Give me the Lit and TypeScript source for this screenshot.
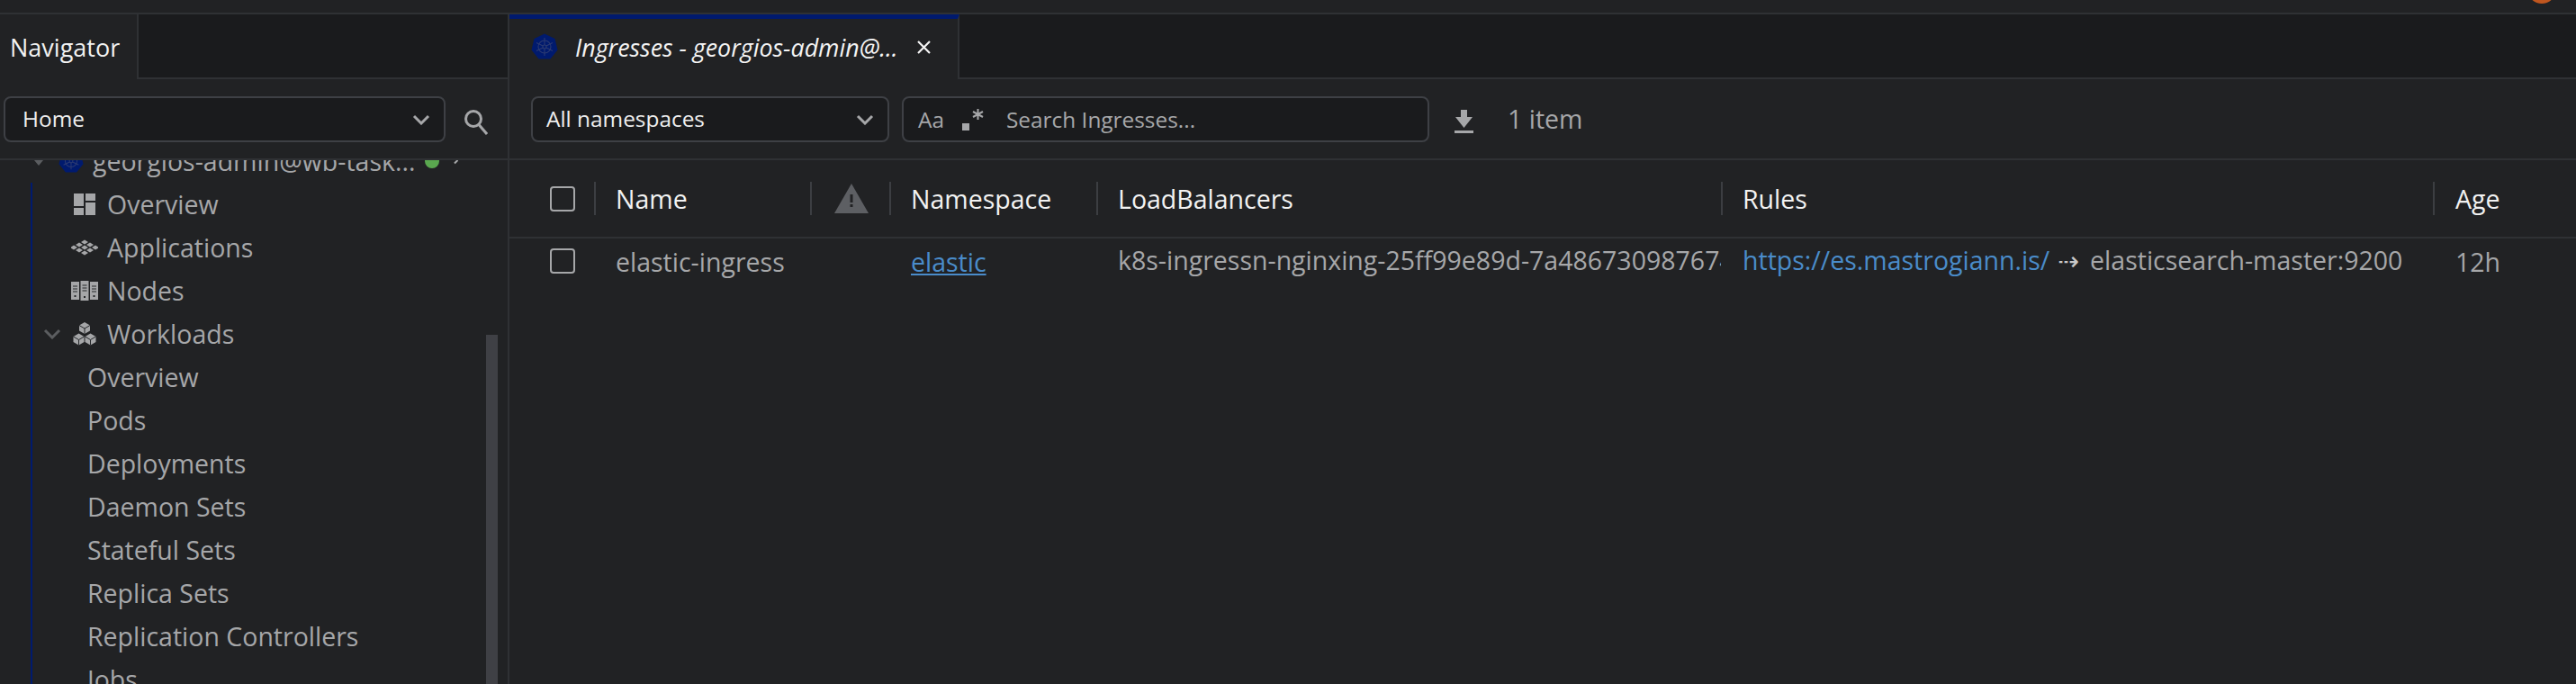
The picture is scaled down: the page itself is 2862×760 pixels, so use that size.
import { LitElement, html, css, svg } from "lit";
import { customElement } from "lit/decorators.js";

const helm = (size: number) => html`<svg width=${size} height=${size} viewBox="0 0 30 30">
  <path fill="#001a6e" d="M15 0.5 L26.5 6 L29.5 18.5 L21.5 28.5 L8.5 28.5 L0.5 18.5 L3.5 6 Z" />
  <g fill="none" stroke="#2b3a72" stroke-width="1.1">
    <circle cx="15" cy="15" r="7" />
    <circle cx="15" cy="15" r="2" />
    <path d="M15 5V13M15 17V25M6 10.500L13.200 14M16.800 16L24 19.500M24 10.500L16.800 14M13.200 16L6 19.500" />
  </g>
</svg>`;

const chevron = html`<svg class="chev" width="20" height="12" viewBox="0 0 20 12">
  <path d="M2 2L10 10L18 2" fill="none" stroke="currentColor" stroke-width="3" />
</svg>`;

const overviewIcon = html`<svg width="24" height="24" viewBox="0 0 24 24" fill="#a5a6a8">
  <rect x="0" y="0" width="11" height="14" />
  <rect x="13" y="0" width="11" height="8" />
  <rect x="0" y="16" width="11" height="8" />
  <rect x="13" y="10" width="11" height="14" />
</svg>`;

const diamonds: [number, number][] = [
  [15, 3], [9, 6], [21, 6], [3, 9], [15, 9], [27, 9], [9, 12], [21, 12], [15, 15],
];
const appsIcon = html`<svg width="30" height="18" viewBox="0 0 30 18" fill="#a5a6a8">
  ${diamonds.map(([x, y]) => svg`<path d="M${x} ${y - 2.500}L${x + 4} ${y}L${x} ${y + 2.500}L${x - 4} ${y}Z" />`)}
</svg>`;

const server = (x: number, top: number, h: number) => svg`
  <rect x=${x} y=${top} width="9" height=${h} fill="#a5a6a8" />
  <path d="M${x + 2} ${top + 5}h5M${x + 2} ${top + 8}h5M${x + 2} ${top + 11}h5" stroke="#26282b" stroke-width="1.200" />
  <rect x=${x + 3.500} y=${top + h - 5} width="2" height="2" fill="#26282b" />`;
const nodesIcon = html`<svg width="30" height="22" viewBox="0 0 30 22">
  ${server(0, 1, 20)}${server(10.500, 0, 22)}${server(21, 1, 20)}
</svg>`;

const cube = (x: number, y: number) => svg`
  <path d="M${x} ${y}L${x + 6} ${y + 3.500}V${y + 9.500}L${x} ${y + 13}L${x - 6} ${y + 9.500}V${y + 3.500}Z" fill="#a5a6a8" />
  <path d="M${x - 6} ${y + 3.500}L${x} ${y + 7}L${x + 6} ${y + 3.500}M${x} ${y + 7}V${y + 13}" stroke="#26282b" stroke-width="1" fill="none" />`;
const workloadsIcon = html`<svg width="26" height="26" viewBox="0 0 26 26">
  ${cube(13, 0)}${cube(6.500, 12.500)}${cube(19.500, 12.500)}
</svg>`;

const workloads = [
  "Overview", "Pods", "Deployments", "Daemon Sets", "Stateful Sets",
  "Replica Sets", "Replication Controllers", "Jobs",
];

@customElement("app-root")
export class AppRoot extends LitElement {
  static styles = css`
    :host {
      display: block;
      width: 2862px;
      height: 760px;
      overflow: hidden;
      background: #212224;
      color: #a6a7a9;
      font-family: "Open Sans", sans-serif;
      font-size: 28.5px;
    }

    .topbar {
      height: 14px;
      border-bottom: 2px solid #2f3134;
      display: flex;
      justify-content: flex-end;
      overflow: hidden;
    }
    .avatar {
      width: 32px;
      height: 32px;
      border-radius: 50%;
      background: #c0561f;
      margin: -28px 22px 0 0;
    }

    .layout {
      display: flex;
      height: 744px;
    }

    /* sidebar */
    .sidebar {
      width: 564px;
      border-right: 2px solid #2f3134;
      display: flex;
      flex-direction: column;
      position: relative;
      overflow: hidden;
    }
    .tabstrip {
      height: 70px;
      display: flex;
      background: #1a1b1d;
      border-bottom: 2px solid #2f3134;
    }
    .nav-tab {
      width: 154px;
      box-sizing: border-box;
      height: 72px;
      padding-left: 11px;
      display: flex;
      align-items: center;
      background: #212224;
      border-right: 2px solid #2f3134;
      color: #f2f2f2;
      font-size: 27px;
    }
    .nav-tools {
      height: 90px;
      box-sizing: border-box;
      border-bottom: 2px solid #2f3134;
      padding: 19px 0 0 4px;
      display: flex;
      gap: 20px;
    }
    .select {
      box-sizing: border-box;
      height: 51px;
      display: flex;
      align-items: center;
      justify-content: space-between;
      background: #1a1b1d;
      border: 2px solid #3e4045;
      border-radius: 8px;
      color: #eeeeee;
      font-size: 24.4px;
    }
    .select span {
      padding-bottom: 2px;
    }
    .select .chev {
      color: #a6a7a9;
    }
    .nav-select {
      width: 491px;
      padding: 0 15px 0 19px;
    }
    .search-btn {
      margin-top: 14px;
    }

    .tree {
      flex: 1;
      overflow: hidden;
    }
    .tree-inner {
      margin-top: -23px;
    }
    .row {
      box-sizing: border-box;
      height: 48px;
      padding-bottom: 1px;
      display: flex;
      align-items: center;
      white-space: nowrap;
    }
    .cluster {
      padding-left: 38px;
    }
    .triangle {
      width: 0;
      height: 0;
      border-left: 5px solid transparent;
      border-right: 5px solid transparent;
      border-top: 6px solid #5b5d60;
      margin: 5px 17px 0 0;
    }
    .cluster-name {
      margin-left: 10px;
    }
    .dot {
      width: 16px;
      height: 16px;
      border-radius: 50%;
      background: #5aa84f;
      margin-left: 11px;
    }
    .fragment {
      margin-left: 18px;
      width: 5px;
      height: 5px;
      border-top: 2px solid #a6a7a9;
      transform: translateY(3px) rotate(-45deg);
    }
    .branch {
      margin-left: 34px;
      border-left: 2px solid #001a6e;
    }
    .icon-slot {
      width: 30px;
      display: flex;
      justify-content: center;
      margin-right: 10px;
    }
    .item {
      padding-left: 43px;
    }
    .parent {
      padding-left: 12px;
    }
    .parent .chev {
      color: #5b5d60;
      margin-right: 11px;
    }
    .sub {
      padding-left: 61px;
    }
    .scrollbar {
      position: absolute;
      left: 540px;
      top: 356px;
      bottom: 0;
      width: 13px;
      background: #3f4045;
    }

    /* main */
    .main {
      flex: 1;
      min-width: 0;
      display: flex;
      flex-direction: column;
    }
    .tabs {
      height: 70px;
      display: flex;
      background: #1a1b1d;
      border-bottom: 2px solid #2f3134;
    }
    .tab {
      width: 500px;
      height: 72px;
      box-sizing: border-box;
      border-top: 5px solid #001a6e;
      border-right: 2px solid #2f3134;
      background: #212224;
      display: flex;
      align-items: center;
      padding: 0 0 5px 24px;
      color: #f4f4f4;
      font-style: italic;
      font-size: 26.8px;
      white-space: nowrap;
    }
    .tab-title {
      margin-left: 19px;
      width: 359px;
    }
    .close {
      margin-left: 20px;
    }

    .toolbar {
      height: 90px;
      box-sizing: border-box;
      border-bottom: 2px solid #2f3134;
      padding: 19px 0 0 24px;
      display: flex;
      gap: 14px;
    }
    .ns-select {
      width: 398px;
      padding: 0 15px 0 15px;
    }
    .search {
      box-sizing: border-box;
      width: 586px;
      height: 51px;
      display: flex;
      align-items: center;
      background: #1a1b1d;
      border: 2px solid #3e4045;
      border-radius: 8px;
      padding-left: 16px;
      color: #a6a7a9;
      font-size: 24.4px;
    }
    .aa {
      width: 49px;
    }
    .regex {
      width: 49px;
      display: flex;
    }
    .download {
      margin: 15px 0 0 14px;
    }
    .count {
      margin: 6px 0 0 24px;
    }

    .grid-row {
      display: grid;
      grid-template-columns: 96px 240px 88px 230px 694px 791px 1fr;
      align-items: center;
      border-bottom: 2px solid #2f3134;
      height: 85px;
    }
    .grid-row.body {
      border-bottom: none;
      height: 52px;
    }
    .head {
      color: #f2f2f2;
    }
    .cell {
      box-sizing: border-box;
      padding-left: 22px;
      white-space: nowrap;
      overflow: hidden;
    }
    .grid-row .age {
      padding-left: 23px;
    }
    .head .cell {
      height: 37px;
      display: flex;
      align-items: center;
      border-right: 2px solid #3c3e42;
    }
    .head .cell:last-child {
      border-right: none;
    }
    .grid-row .cb-cell {
      padding-left: 45px;
      display: flex;
    }
    .body .cb-cell {
      padding-bottom: 2px;
    }
    .check {
      box-sizing: border-box;
      width: 28px;
      height: 28px;
      border: 2px solid #a6a7a9;
      border-radius: 4px;
    }
    .head .warn {
      padding-left: 25px;
    }
    a {
      color: #4a8cca;
    }
    .plain-link {
      text-decoration: none;
    }
    .lb {
      margin-right: 2px;
      padding-bottom: 5px;
    }
    .rules {
      padding-bottom: 5px;
    }
    .arrow {
      font-family: "DejaVu Sans", sans-serif;
      margin: 0 12px 0 9px;
      color: #c8c8c8;
    }
  `;

  render() {
    return html`
      <div class="topbar"><div class="avatar"></div></div>
      <div class="layout">
        <aside class="sidebar">
          <div class="tabstrip"><div class="nav-tab">Navigator</div></div>
          <div class="nav-tools">
            <div class="select nav-select"><span>Home</span>${chevron}</div>
            <svg class="search-btn" width="27" height="29" viewBox="0 0 27 29" fill="none" stroke="#a6a7a9" stroke-width="3">
              <circle cx="11" cy="11" r="8.500" />
              <path d="M17 17.500L26 28" />
            </svg>
          </div>
          <div class="tree">
            <div class="tree-inner">
              <div class="row cluster">
                <span class="triangle"></span>${helm(28)}
                <span class="cluster-name">georgios-admin@wb-task...</span>
                <span class="dot"></span><span class="fragment"></span>
              </div>
              <div class="branch">
                <div class="row item"><span class="icon-slot">${overviewIcon}</span>Overview</div>
                <div class="row item"><span class="icon-slot">${appsIcon}</span>Applications</div>
                <div class="row item"><span class="icon-slot">${nodesIcon}</span>Nodes</div>
                <div class="row parent">${chevron}<span class="icon-slot">${workloadsIcon}</span>Workloads</div>
                ${workloads.map((w) => html`<div class="row sub">${w}</div>`)}
              </div>
            </div>
          </div>
          <div class="scrollbar"></div>
        </aside>

        <section class="main">
          <div class="tabs">
            <div class="tab">
              ${helm(30)}
              <span class="tab-title">Ingresses - georgios-admin@...</span>
              <svg class="close" width="17" height="17" viewBox="0 0 17 17" stroke="#f4f4f4" stroke-width="2.200">
                <path d="M2 2L15 15M15 2L2 15" />
              </svg>
            </div>
          </div>
          <div class="toolbar">
            <div class="select ns-select"><span>All namespaces</span>${chevron}</div>
            <div class="search">
              <span class="aa">Aa</span>
              <span class="regex">
                <svg width="26" height="26" viewBox="0 0 26 26" fill="#a6a7a9">
                  <rect x="0" y="17" width="8" height="8" />
                  <path d="M17.500 1v12M12 4l11 6M23 4l-11 6" stroke="#a6a7a9" stroke-width="2" />
                </svg>
              </span>
              <span>Search Ingresses...</span>
            </div>
            <svg class="download" width="21" height="26" viewBox="0 0 21 26" fill="#a6a7a9">
              <path d="M7 0H14V8H20L10.500 20L1 8H7Z" />
              <rect x="0" y="23" width="21" height="3" />
            </svg>
            <span class="count">1 item</span>
          </div>

          <div class="grid-row head">
            <div class="cell cb-cell"><span class="check"></span></div>
            <div class="cell">Name</div>
            <div class="cell warn">
              <svg width="38" height="33" viewBox="0 0 38 33">
                <path d="M19 0L38 33H0Z" fill="#5d5f63" />
                <rect x="17.500" y="12" width="3" height="9" fill="#212224" />
                <rect x="17.500" y="23" width="3" height="3" fill="#212224" />
              </svg>
            </div>
            <div class="cell">Namespace</div>
            <div class="cell">LoadBalancers</div>
            <div class="cell">Rules</div>
            <div class="cell age">Age</div>
          </div>
          <div class="grid-row body">
            <div class="cell cb-cell"><span class="check"></span></div>
            <div class="cell">elastic-ingress</div>
            <div class="cell"></div>
            <div class="cell"><a href="#">elastic</a></div>
            <div class="cell lb">k8s-ingressn-nginxing-25ff99e89d-7a4867309876744512</div>
            <div class="cell rules">
              <a class="plain-link" href="#">https://es.mastrogiann.is/</a><span class="arrow">⇢</span>elasticsearch-master:9200
            </div>
            <div class="cell age">12h</div>
          </div>
        </section>
      </div>
    `;
  }
}
